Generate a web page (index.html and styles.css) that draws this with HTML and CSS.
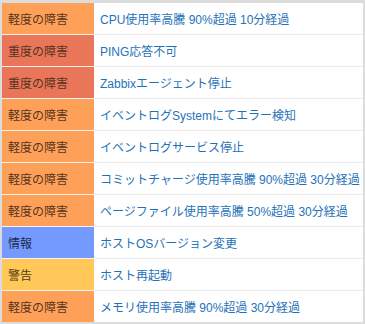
FILE: index.html
```html
<!DOCTYPE html>
<html lang="ja">
<head>
<meta charset="utf-8">
<link rel="stylesheet" href="styles.css">
</head>
<body>
<div class="frame">
  <table class="problems">
    <tbody>
      <tr><td class="sev average">軽度の障害</td><td class="name">CPU使用率高騰 90%超過 10分経過</td></tr>
      <tr><td class="sev high">重度の障害</td><td class="name">PING応答不可</td></tr>
      <tr><td class="sev high">重度の障害</td><td class="name">Zabbixエージェント停止</td></tr>
      <tr><td class="sev average">軽度の障害</td><td class="name">イベントログSystemにてエラー検知</td></tr>
      <tr><td class="sev average">軽度の障害</td><td class="name">イベントログサービス停止</td></tr>
      <tr><td class="sev average">軽度の障害</td><td class="name">コミットチャージ使用率高騰 90%超過 30分経過</td></tr>
      <tr><td class="sev average">軽度の障害</td><td class="name">ページファイル使用率高騰 50%超過 30分経過</td></tr>
      <tr><td class="sev info">情報</td><td class="name">ホストOSバージョン変更</td></tr>
      <tr><td class="sev warning">警告</td><td class="name">ホスト再起動</td></tr>
      <tr><td class="sev average">軽度の障害</td><td class="name">メモリ使用率高騰 90%超過 30分経過</td></tr>
    </tbody>
  </table>
</div>
</body>
</html>
```

FILE: styles.css
```css
html, body {
  margin: 0;
  padding: 0;
  background: #dcdcdc;
}
body {
  font-family: "Liberation Sans", Arial, "Noto Sans CJK JP", sans-serif;
  font-size: 12px;
}
.frame {
  padding: 3px 2px 2px 2px;
}
.problems {
  width: 361px;
  border-collapse: collapse;
  background: #ffffff;
  table-layout: fixed;
}
.problems tr + tr td {
  border-top: 1px solid #ebebeb;
}
.problems tr + tr td.sev {
  border-top-color: #f4f4f4;
}
.problems td {
  height: 31px;
  padding: 0 0 0 6px;
  vertical-align: middle;
  white-space: nowrap;
  box-sizing: border-box;
}
.problems tr + tr td {
  height: 32px;
}
.sev {
  width: 92px;
  color: #553420;
}
.name {
  padding-left: 3px;
  color: #1f72b8;
}
.average { background: #ffa059; }
.high { background: #e97659; }
.info { background: #7499ff; color: #1f2c4a; }
.warning { background: #ffc859; color: #4f3f12; }
```
